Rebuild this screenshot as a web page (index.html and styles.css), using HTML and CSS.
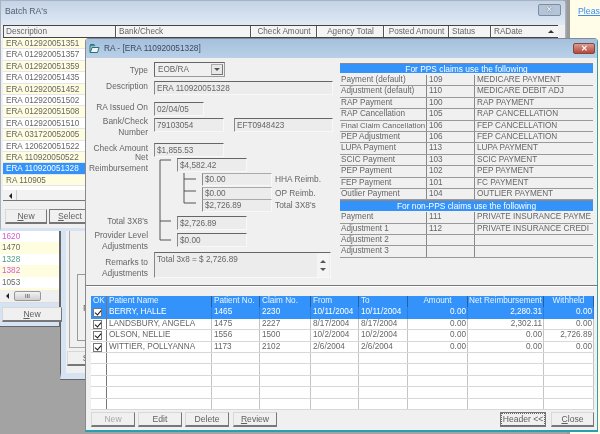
FILE: index.html
```html
<!DOCTYPE html>
<html lang="en">
<head>
<meta charset="utf-8">
<title>RA</title>
<link rel="stylesheet" href="styles.css">
</head>
<body>
<div class="desktop">
  <div class="side-pane"><a class="side-link" href="#">Pleas</a></div>

  <div class="win win-far">
    <div class="far-group"><div class="far-box"><span class="far-p">P</span></div></div>
    <div class="btn far-btn">Se</div>
  </div>

  <div class="win win-mid">
    <div class="mid-list">
      <div class="mid-row c-mag">1620</div>
      <div class="mid-row alt c-grey">1470</div>
      <div class="mid-row c-green">1328</div>
      <div class="mid-row alt c-mag">1382</div>
      <div class="mid-row c-grey">1053</div>
      <div class="mid-row alt"></div>
    </div>
    <div class="mid-scroll"><i class="arrow-left"></i><span class="thumb">III</span></div>
    <div class="btn mid-btn"><u>N</u>ew</div>
  </div>

  <div class="win win-batch">
    <div class="batch-title">
      <span>Batch RA's</span>
      <span class="close close-grey">✕</span>
    </div>
    <div class="batch-head">
      <div class="hc w-desc">Description</div>
      <div class="hc w-bank">Bank/Check</div>
      <div class="hc w-chk ctr">Check Amount</div>
      <div class="hc w-agn ctr">Agency Total</div>
      <div class="hc w-post ctr">Posted Amount</div>
      <div class="hc w-stat">Status</div>
      <div class="hc w-date">RADate<i class="arrow-up"></i></div>
    </div>
    <div class="batch-list">
      <div class="b-row alt">ERA 012920051351</div>
      <div class="b-row">ERA 012920051357</div>
      <div class="b-row alt">ERA 012920051359</div>
      <div class="b-row">ERA 012920051435</div>
      <div class="b-row alt">ERA 012920051452</div>
      <div class="b-row">ERA 012920051502</div>
      <div class="b-row alt">ERA 012920051508</div>
      <div class="b-row">ERA 012920051510</div>
      <div class="b-row alt">ERA 031720052005</div>
      <div class="b-row">ERA 120620051522</div>
      <div class="b-row alt">ERA 110920050522</div>
      <div class="b-row sel">ERA 110920051328</div>
      <div class="b-row alt">RA 110905</div>
    </div>
    <div class="batch-scroll"><i class="arrow-left"></i><span class="scroll-cap"></span></div>
    <div class="batch-btns">
      <div class="btn btn-new"><u>N</u>ew</div>
      <div class="btn btn-select"><u>S</u>elect</div>
    </div>
  </div>

  <div class="win win-ra">
    <div class="ra-title">
      <svg class="ra-icon" width="11" height="11" viewBox="0 0 11 11"><path d="M1 3.5V9.5H8.5L10 4.5H3L1.5 9" fill="#eef6f6" stroke="#2f6f78"/><path d="M1 3.5L1.5 1.5H5L6 3" fill="#3a98a2" stroke="#2f6f78"/></svg>
      <span class="ra-caption">RA - [ERA 110920051328]</span>
      <span class="close close-red">✕</span>
    </div>
    <div class="ra-top">
      <div class="form">
        <svg class="tree" width="130" height="100" viewBox="0 0 130 100"><path d="M74 6H85M74 6V86M74 67H85M74 86H85M98 19V49M98 25H110M98 37H110M98 49H110" fill="none" stroke="#555"/></svg>
        <div class="lab lab-type">Type</div>
        <div class="fld"><div class="combo">EOB/RA<span class="combo-btn"><i class="arrow-down"></i></span></div></div>
        <div class="lab">Description</div>
        <div class="fld"><div class="box w-full">ERA 110920051328</div></div>
        <div class="lab">RA Issued On</div>
        <div class="fld"><div class="box w-date-box">02/04/05</div></div>
        <div class="lab lab-bank">Bank/Check Number</div>
        <div class="fld fld-pair"><div class="box w-num">79103054</div><div class="box w-eft">EFT0948423</div></div>
        <div class="lab">Check Amount</div>
        <div class="fld"><div class="box w-num">$1,855.53</div></div>
        <div class="lab lab-net">Net Reimbursement</div>
        <div class="fld ind1"><div class="box w-num">$4,582.42</div></div>
        <div class="lab"></div>
        <div class="fld ind2"><div class="box w-num box-tight">$0.00</div><span class="side">HHA Reimb.</span></div>
        <div class="lab"></div>
        <div class="fld ind2"><div class="box w-num box-tight">$0.00</div><span class="side">OP Reimb.</span></div>
        <div class="lab"></div>
        <div class="fld ind2"><div class="box w-num box-tight">$2,726.89</div><span class="side">Total 3X8's</span></div>
        <div class="lab">Total 3X8's</div>
        <div class="fld ind1"><div class="box w-num">$2,726.89</div></div>
        <div class="lab lab-prov">Provider Level Adjustments</div>
        <div class="fld ind1"><div class="box w-num">$0.00</div></div>
        <div class="lab lab-rem">Remarks to Adjustments</div>
        <div class="fld"><div class="memo">Total 3x8 = $ 2,726.89<span class="memo-bar"><i class="arrow-up"></i><i class="arrow-down"></i></span></div></div>
      </div>
      <div class="codes">
        <div class="c-head">For PPS claims use the following</div>
        <div class="c-row"><span>Payment (default)</span><span>109</span><span>MEDICARE PAYMENT</span></div>
        <div class="c-row"><span>Adjustment (default)</span><span>110</span><span>MEDICARE DEBIT ADJ</span></div>
        <div class="c-row"><span>RAP Payment</span><span>100</span><span>RAP PAYMENT</span></div>
        <div class="c-row"><span>RAP Cancellation</span><span>105</span><span>RAP CANCELLATION</span></div>
        <div class="c-row"><span class="tight">Final Claim Cancellation</span><span>106</span><span>FEP CANCELLATION</span></div>
        <div class="c-row"><span>PEP Adjustment</span><span>106</span><span>FEP CANCELLATION</span></div>
        <div class="c-row"><span>LUPA Payment</span><span>113</span><span>LUPA PAYMENT</span></div>
        <div class="c-row"><span>SCIC Payment</span><span>103</span><span>SCIC PAYMENT</span></div>
        <div class="c-row"><span>PEP Payment</span><span>102</span><span>PEP PAYMENT</span></div>
        <div class="c-row"><span>FEP Payment</span><span>101</span><span>FC PAYMENT</span></div>
        <div class="c-row"><span>Outlier Payment</span><span>104</span><span>OUTLIER PAYMENT</span></div>
        <div class="c-head c-head2">For non-PPS claims use the following</div>
        <div class="c-row"><span>Payment</span><span>111</span><span>PRIVATE INSURANCE PAYME</span></div>
        <div class="c-row"><span>Adjustment 1</span><span>112</span><span>PRIVATE INSURANCE CREDI</span></div>
        <div class="c-row"><span>Adjustment 2</span><span></span><span></span></div>
        <div class="c-row"><span>Adjustment 3</span><span></span><span></span></div>
      </div>
    </div>
    <div class="grid-wrap">
      <div class="g-row g-head">
        <span>OK</span><span>Patient Name</span><span>Patient No.</span><span>Claim No.</span><span>From</span><span>To</span><span class="ctr">Amount</span><span class="ctr">Net Reimbursement</span><span class="ctr">Withheld</span>
      </div>
      <div class="g-row g-sel">
        <span><i class="chk"></i></span><span>BERRY, HALLE</span><span>1465</span><span>2230</span><span>10/11/2004</span><span>10/11/2004</span><span class="num">0.00</span><span class="num">2,280.31</span><span class="num">0.00</span>
      </div>
      <div class="g-row">
        <span><i class="chk"></i></span><span>LANDSBURY, ANGELA</span><span>1475</span><span>2227</span><span>8/17/2004</span><span>8/17/2004</span><span class="num">0.00</span><span class="num">2,302.11</span><span class="num">0.00</span>
      </div>
      <div class="g-row">
        <span><i class="chk"></i></span><span>OLSON, NELLIE</span><span>1556</span><span>1500</span><span>10/2/2004</span><span>10/2/2004</span><span class="num">0.00</span><span class="num">0.00</span><span class="num">2,726.89</span>
      </div>
      <div class="g-row">
        <span><i class="chk"></i></span><span>WITTIER, POLLYANNA</span><span>1173</span><span>2102</span><span>2/6/2004</span><span>2/6/2004</span><span class="num">0.00</span><span class="num">0.00</span><span class="num">0.00</span>
      </div>
      <div class="g-row"><span></span><span></span><span></span><span></span><span></span><span></span><span></span><span></span><span></span></div>
      <div class="g-row"><span></span><span></span><span></span><span></span><span></span><span></span><span></span><span></span><span></span></div>
      <div class="g-row"><span></span><span></span><span></span><span></span><span></span><span></span><span></span><span></span><span></span></div>
      <div class="g-row"><span></span><span></span><span></span><span></span><span></span><span></span><span></span><span></span><span></span></div>
      <div class="g-row"><span></span><span></span><span></span><span></span><span></span><span></span><span></span><span></span><span></span></div>
    </div>
    <div class="ra-btns">
      <div class="btn rb dis">New</div>
      <div class="btn rb">Edit</div>
      <div class="btn rb">Delete</div>
      <div class="btn rb rb-rev"><u>R</u>eview</div>
      <div class="btn rb-head">Header &lt;&lt;</div>
      <div class="btn rb-close"><u>C</u>lose</div>
    </div>
  </div>
</div>
</body>
</html>
```
FILE: styles.css
```css
* { box-sizing: border-box; }
html, body { margin: 0; padding: 0; }
body { width: 600px; height: 434px; overflow: hidden; background: #a3a3a3; }
.desktop {
  position: relative; width: 600px; height: 434px; overflow: hidden;
  background: #a3a3a3; color: #666;
  font: 8.2px/1 "Liberation Sans", Arial, sans-serif;
  filter: blur(0.35px);
}
.win { position: absolute; }
.ctr { text-align: center; }
u { text-decoration: underline; }

/* right pale pane */
.side-pane { position: absolute; left: 567px; top: 0; width: 33px; height: 434px; background: #fffde8; border-left: 3px solid #9a9a9a; padding: 7px 0 0 8px; }
.side-link { color: #3d8df0; font-size: 8.8px; }

/* windows behind */
.win-far { left: 60px; top: 200px; width: 30px; height: 179px; background: #f0f0f0; border-left: 1px solid #666; border-bottom: 6px solid #d5e3f2; box-shadow: 0 1px 0 #666; }
.win-far::before { content: ""; position: absolute; left: 0; top: 0; bottom: 0; width: 5px; background: #d5e3f2; }
.far-group { position: absolute; left: 8px; top: 0; width: 30px; height: 148px; border: 1px solid #aaa; border-right: 0; }
.far-box { position: absolute; left: 7px; top: 73px; width: 30px; height: 67px; border: 1px solid #999; border-right: 0; }
.far-p { position: absolute; left: 5px; top: 29px; font-size: 9px; }
.far-btn { position: absolute; left: 6px; top: 151px; width: 40px; height: 15px; justify-content: flex-start; padding-left: 2px; }

.win-mid { left: 0; top: 231px; width: 60px; height: 96px; background: #d5e3f2; border-right: 1px solid #666; border-bottom: 1px solid #666; }
.mid-list { background: #fff; height: 59px; }
.mid-row { height: 11.4px; line-height: 11.4px; padding-left: 2px; font-size: 8.2px; }
.mid-row.alt { background: #fffde0; }
.c-mag { color: #d65ad6; }
.c-green { color: #4f9c82; }
.c-grey { color: #6a6a6a; }
.mid-scroll { position: relative; height: 13px; background: #f0f0f0; border-bottom: 1px solid #ddd; }
.thumb { position: absolute; left: 14px; top: 1px; width: 27px; height: 10px; background: linear-gradient(#f2f2f2, #d0d0d0); border: 1px solid #999; border-radius: 2px; text-align: center; font-size: 6px; line-height: 8px; color: #444; }
.mid-btn { position: absolute; left: 2px; top: 76px; width: 60px; height: 15px; }

/* shared pieces */
.btn { display: flex; align-items: center; justify-content: center; background: #f0f0f0; border: 1px solid #d8d8d8; border-right: 1px solid #777; border-bottom: 2px solid #777; color: #606060; font-size: 8.6px; }
.arrow-left { position: absolute; left: 6px; top: 3px; width: 0; height: 0; border: 3px solid transparent; border-right-color: #222; border-left-width: 0; }
.arrow-up, .arrow-down { display: block; width: 0; height: 0; border: 3px solid transparent; border-top-width: 0; border-bottom-color: #555; }
.arrow-down { border-top: 3px solid #555; border-bottom-width: 0; }
.close { position: absolute; display: flex; align-items: center; justify-content: center; color: #fff; font-size: 8px; font-weight: bold; border-radius: 2px; }
.close-grey { left: 537px; top: 3px; width: 23px; height: 12px; background: #b4c5da; border: 1px solid #7f8c9b; color: #f4f4f4; text-shadow: 0 0 1px #334; }
.close-red { left: 487px; top: 4px; width: 22px; height: 11px; background: linear-gradient(#dc9a8e, #b8483a); border: 1px solid #7d4a44; }

/* batch window */
.win-batch { left: 0; top: 0; width: 566px; height: 231px; background: #f0f0f0; border: 1px solid #a9b3c0; border-radius: 0 5px 0 0; border-bottom: 3px solid #d5e3f2; }
.batch-title { height: 24px; background: linear-gradient(#c3d2e5, #e0eaf5); padding: 6px 0 0 4px; font-size: 8.6px; color: #4f6072; }
.batch-head { display: flex; height: 13px; margin-left: 2px; margin-top: 0; width: 555px; border-top: 1px solid #444; border-bottom: 1px solid #444; background: #f4f4f4; }
.hc { position: relative; border-right: 1px solid #555; line-height: 11px; padding-left: 2px; white-space: nowrap; border-left: 1px solid #fff; }
.hc.ctr { padding-left: 0; }
.w-desc { width: 113px; border-left: 1px solid #555; }
.w-bank { width: 135px; }
.w-chk { width: 66px; }
.w-agn { width: 67px; }
.w-post { width: 65px; }
.w-stat { width: 42px; }
.w-date { flex: 1; border-right: 0; padding-left: 2px; }
.w-date .arrow-up { position: absolute; right: 4px; top: 4px; border-bottom-color: #333; }
.batch-list { margin-left: 2px; width: 120px; background: #fff; height: 152px; }
.b-row { height: 11.4px; line-height: 11.4px; padding-left: 3px; border-bottom: 1px solid #e6e6e6; white-space: nowrap; }
.b-row.alt { background: #fffde0; }
.b-row.sel { background: #3393fb; color: #fff; }
.batch-scroll { position: relative; margin-left: 2px; width: 120px; height: 11px; background: #f2f2f2; border-bottom: 1px solid #777; }
.scroll-cap { position: absolute; left: 13px; top: 0; bottom: 0; border-left: 1px solid #ccc; }
.batch-btns { display: flex; gap: 2px; margin: 8px 0 0 4px; }
.btn-new { width: 42px; height: 15px; }
.btn-select { width: 42px; height: 15px; border-left: 1px solid #777; border-top: 1px solid #777; }

/* RA window */
.win-ra { left: 85px; top: 38px; width: 513px; height: 394px; background: #f0f0f0; border: 1px solid #6a9aa6; border-left: 1px solid #8a8a8a; border-top: 1px solid #7e8b98; border-right: 1px solid #3b9aa8; border-bottom: 2px solid #2a9fb0; border-radius: 4px 4px 0 0; }
.ra-title { position: relative; height: 19px; background: linear-gradient(#a5c0dd, #b9d0e7); display: flex; align-items: center; gap: 4px; padding: 0 0 0 3px; color: #3b4a5c; font-size: 8.3px; }
.ra-top { display: flex; height: 228px; border-bottom: 1px solid #777; box-shadow: 0 1px 0 #fff; }
.form { position: relative; width: 254px; flex: none; padding-top: 4px; display: grid; grid-template-columns: 62px 1fr; column-gap: 6px; grid-template-rows: 19px 21px 16px 25px 15px 15px 13.5px 12px 17.5px 17px 19px 26px; }
.tree { position: absolute; left: 0; top: 96px; }
.lab { text-align: right; font-size: 8.4px; line-height: 10.5px; color: #666; }
.lab-type { padding-top: 3px; }
.lab-bank { margin-top: -2px; }
.lab-net { margin-top: -6px; }
.lab-prov { margin-top: -3px; }
.lab-rem { padding-top: 5px; }
.fld { display: flex; align-items: flex-start; }
.fld-pair { gap: 10px; }
.ind1 { padding-left: 23px; }
.ind2 { padding-left: 48px; }
.combo { position: relative; width: 71px; height: 15px; border: 1px solid #999; border-top-color: #666; border-left-color: #666; line-height: 13px; padding-left: 3px; background: #f0f0f0; }
.combo-btn { position: absolute; right: 1px; top: 1px; width: 12px; height: 11px; background: #e8e8e8; border: 1px solid #aaa; border-right-color: #777; border-bottom-color: #777; padding: 3px 0 0 2px; }
.box { height: 14px; line-height: 13px; padding-left: 2px; border: 1px solid #f8f8f8; border-top: 1px solid #666; border-left: 1px solid #888; background: #ececec; white-space: nowrap; }
.box-tight { height: 13px; line-height: 12px; border-top-color: #aaa; }
.w-full { width: 179px; }
.w-date-box { width: 50px; }
.w-num { width: 70px; }
.w-eft { width: 99px; }
.side { padding: 2px 0 0 3px; font-size: 8.4px; white-space: nowrap; color: #666; }
.memo { position: relative; width: 177px; height: 26px; border: 1px solid #f8f8f8; border-top: 1px solid #666; border-left: 1px solid #888; padding: 3px 0 0 2px; background: #ececec; }
.memo-bar { position: absolute; right: 1px; top: 0; bottom: 0; width: 12px; background: #f4f4f4; display: flex; flex-direction: column; justify-content: space-around; align-items: center; padding: 4px 0; }
.codes { width: 253px; flex: none; padding-top: 5px; }
.c-head { height: 10px; line-height: 10px; background: #3393fb; color: #fff; text-align: center; font-size: 8.4px; border-top: 1px solid #888; margin-bottom: 2px; }
.c-head2 { height: 11px; line-height: 10px; margin: 0 0 1px; }
.c-row { display: grid; grid-template-columns: 87px 48px 118px; height: 11.4px; line-height: 10.4px; border-bottom: 1px solid #999; white-space: nowrap; overflow: hidden; }
.c-row span { padding-left: 2px; border-right: 1px solid #888; overflow: hidden; }
.c-row span:first-child { padding-left: 1px; }
.c-row span:last-child { border-right: 0; }
.c-row span.tight { font-size: 7.8px; padding-left: 1px; }

/* patient grid */
.grid-wrap { margin: 10px 0 0 5px; width: 503px; background: #fff; }
.g-row { display: grid; grid-template-columns: 16px 105px 48px 51px 48px 49px 60px 76px 50px; height: 11.4px; line-height: 10.4px; border-bottom: 1px solid #d8d8d8; white-space: nowrap; }
.g-row span { position: relative; padding-left: 2px; border-right: 1px solid #c4c4c4; overflow: hidden; }
.g-row span:first-child { border-right-color: #777; }
.g-row span.num { text-align: right; padding: 0 1px 0 0; }
.g-head { background: #3393fb; color: #eaf4ff; border-bottom: 0; }
.g-head span { border-right-color: #2a5f9e; }
.g-head span.ctr { padding-left: 0; }
.g-sel { background: #3393fb; color: #fff; border-bottom: 0; }
.g-sel span { border-right-color: #2f7fd8; }
.chk { position: absolute; left: 2px; top: 1px; width: 9px; height: 9px; background: #fff; border: 1px solid #777; }
.chk::after { content: ""; position: absolute; left: 2px; top: 0; width: 3px; height: 5px; border: solid #111; border-width: 0 1.5px 1.5px 0; transform: rotate(40deg); }
.ra-btns { display: flex; margin: 2px 0 0 5px; width: 503px; height: 15px; gap: 3px; }
.rb { width: 44px; }
.rb.dis { color: #a8a8a8; }
.rb-rev { margin-left: 1px; }
.rb-head { margin-left: auto; width: 46px; outline: 1px dotted #666; outline-offset: -2px; border-color: #777; }
.rb-close { width: 43px; margin-left: 2px; }
```
